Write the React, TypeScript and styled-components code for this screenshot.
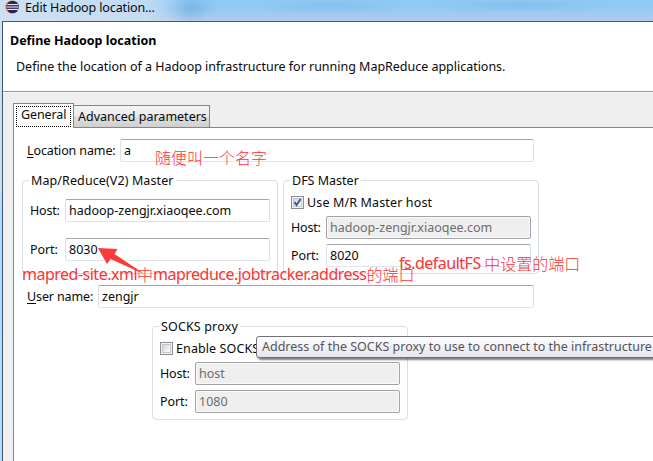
import React from 'react';
import styled, { createGlobalStyle } from 'styled-components';

const Global = createGlobalStyle`
  * { box-sizing: border-box; }
  html, body { margin: 0; padding: 0; overflow: hidden; }
  body { font: 12.5px/23px "Noto Sans", "Noto Sans CJK SC", sans-serif; color: #0a0a0a; }
`;

const Window = styled.div`
  position: relative;
  width: 653px;
  height: 461px;
  overflow: hidden;
  display: flex;
  flex-direction: column;
  background: #efefef;
`;

const TitleBar = styled.header`
  flex: none;
  height: 21px;
  display: flex;
  align-items: flex-start;
  gap: 6px;
  padding-left: 5px;
  line-height: 15px;
  background:
    linear-gradient(90deg, rgba(214, 228, 242, 0.85) 0, rgba(208, 225, 243, 0.75) 145px, rgba(200, 222, 243, 0) 190px),
    radial-gradient(ellipse 28px 14px at 188px 8px, rgba(110, 172, 225, 0.7), rgba(110, 172, 225, 0)),
    radial-gradient(ellipse 70px 8px at 330px 6px, rgba(130, 190, 236, 0.8), rgba(130, 190, 236, 0)),
    radial-gradient(ellipse 90px 7px at 520px 5px, rgba(128, 190, 236, 0.8), rgba(128, 190, 236, 0)),
    linear-gradient(#8dcaf5 0, #94c9f3 45%, #a9c9ed 75%, #b0ccec);
`;

const Logo = styled.svg`
  display: block;
  width: 14px;
  height: 14px;
`;

const Text = styled.span<{ $ls?: number }>`
  white-space: nowrap;
  letter-spacing: ${(p) => p.$ls ?? 0}px;
`;

const Frame = styled.div`
  flex: 1;
  display: flex;
  background: linear-gradient(#d3e1ee 0, #cfdfee 168px, #b3d8fa 182px, #b5d8f8);
  padding-left: 2px;
`;

const Dialog = styled.main`
  flex: 1;
  display: flex;
  flex-direction: column;
  border-top: 1px solid #46597a;
  border-left: 1px solid #3f5673;
  background: #efefef;
`;

const Banner = styled.section`
  height: 70px;
  flex: none;
  display: flex;
  flex-direction: column;
  padding: 7px 0 0 7px;
  background: #fff;
  border-bottom: 1px solid #98989a;
`;

const Heading = styled.h1`
  margin: 0;
  font-size: 12.5px;
  font-weight: 700;
  line-height: 23px;
  color: #000;
`;

const Description = styled.p`
  margin: 3px 0 0 6px;
  line-height: 23px;
`;

const Tabs = styled.section`
  flex: 1;
  display: flex;
  flex-direction: column;
  padding: 10px 0 0 10px;
  border-top: 1px solid #fbfbfb;
`;

const TabList = styled.div`
  display: flex;
  align-items: flex-end;
  height: 24px;
  flex: none;
`;

const ActiveTab = styled.div`
  width: 61px;
  height: 25px;
  margin-bottom: -1px;
  z-index: 1;
  padding: 2px 2px 0;
  border: 1px solid #85858f;
  border-bottom: 0;
  background: #fff;
`;

const FocusRing = styled.div`
  width: 55px;
  height: 21px;
  padding-left: 4px;
  border: 1px dotted #000;
  line-height: 16px;
`;

const Tab = styled.div`
  width: 136px;
  height: 22px;
  padding-left: 4px;
  border: 1px solid #85858f;
  border-left: 0;
  border-bottom: 0;
  background: linear-gradient(#f3f3f3 0, #ececec 48%, #dedede 52%, #d0d0d0);
  line-height: 22px;
`;

const Page = styled.div`
  flex: 1;
  display: flex;
  flex-direction: column;
  align-items: flex-start;
  padding: 11px 0 0 8px;
  border-top: 1px solid #85858f;
  border-left: 1px solid #85858f;
  background: #fff;
`;

const Row = styled.div<{ $top?: number; $indent?: number }>`
  display: flex;
  height: 23px;
  margin-top: ${(p) => p.$top ?? 0}px;
  margin-left: ${(p) => p.$indent ?? 0}px;
`;

const Label = styled.label<{ $w: number; $ls?: number }>`
  width: ${(p) => p.$w}px;
  flex: none;
  white-space: nowrap;
  letter-spacing: ${(p) => p.$ls ?? 0}px;
  u { text-decoration: underline; text-underline-offset: 2px; text-decoration-thickness: 1px; }
`;

const Field = styled.div<{ $w: number; $off?: boolean }>`
  width: ${(p) => p.$w}px;
  height: 23px;
  padding-left: 3px;
  border: 1px solid;
  border-color: ${(p) => (p.$off ? '#a2a3a6' : '#a4a5ad #dbdfe6 #dfe5ee #dbdfe6')};
  border-radius: 2px;
  background: ${(p) => (p.$off ? '#efefef' : '#fff')};
  box-shadow: ${(p) => (p.$off ? 'inset 0 0 0 1px #fafafa' : 'none')};
  color: ${(p) => (p.$off ? '#6d6d6d' : '#0a0a0a')};
  line-height: 21px;
  white-space: nowrap;
`;

const Groups = styled.div`
  display: flex;
  gap: 5px;
  margin-top: 18px;
`;

const Group = styled.div`
  display: flex;
  flex-direction: column;
  align-items: flex-start;
  width: 256px;
  height: 94px;
  padding-left: 7px;
  border: 1px solid #d5dfe5;
  border-radius: 4px;
`;

const Legend = styled.div<{ $ls?: number }>`
  height: 16px;
  margin: -9px 0 0 -1px;
  padding: 0 2px;
  background: #fff;
  line-height: 17px;
  letter-spacing: ${(p) => p.$ls ?? 0}px;
  white-space: nowrap;
`;

const CheckRow = styled.div`
  display: flex;
  align-items: center;
  gap: 3px;
  height: 13px;
  margin-top: 8px;
`;

const CheckBox = styled.span`
  width: 13px;
  height: 13px;
  flex: none;
  display: flex;
  border: 1px solid #8b8d90;
  background: linear-gradient(135deg, #c3c7ce, #fafafa 75%);
  box-shadow: inset 0 0 0 1px #f4f4f4, inset 0 0 0 2px #c3c7cd;
  svg { width: 11px; height: 11px; }
`;

const ProxySection = styled.div`
  margin: 18px 0 0 130px;
`;

const Tooltip = styled.div`
  position: absolute;
  left: 256px;
  top: 336px;
  width: 410px;
  height: 22px;
  padding-left: 5px;
  border: 1px solid #717177;
  border-radius: 3px;
  background: linear-gradient(#fff, #e5e5f0);
  box-shadow: 2px 2px 2px rgba(0, 0, 0, 0.5);
  color: #555;
  line-height: 20px;
  white-space: nowrap;
`;

const Note = styled.div<{ $x: number; $y: number }>`
  position: absolute;
  left: ${(p) => p.$x}px;
  top: ${(p) => p.$y}px;
  display: flex;
  color: #fb3434;
  font-size: 16px;
  letter-spacing: -0.5px;
  line-height: 20px;
  white-space: pre;
`;

const Han = styled.span`
  font-family: "Noto Sans CJK SC", sans-serif;
  font-size: 16px;
  font-weight: 300;
  letter-spacing: 0;
`;

const Arrow = styled.svg`
  position: absolute;
  left: 97px;
  top: 246px;
  width: 50px;
  height: 32px;
`;

export default function App() {
  return (
    <>
      <Global />
      <Window>
        <TitleBar>
          <Logo viewBox="0 0 14 14">
            <circle cx="6.6" cy="7" r="6.4" fill="#f39a2b" />
            <circle cx="7.6" cy="7" r="6.3" fill="#2c2255" />
            <path d="M2.2 4.6h10.8M1.6 7h12M2.2 9.4h10.8" stroke="#fff" strokeWidth="1" />
          </Logo>
          <Text $ls={-0.12}>Edit Hadoop location...</Text>
        </TitleBar>
        <Frame>
          <Dialog>
            <Banner>
              <Heading><Text>Define Hadoop location</Text></Heading>
              <Description>
                <Text $ls={-0.02}>Define the location of a Hadoop infrastructure for running MapReduce applications.</Text>
              </Description>
            </Banner>
            <Tabs>
              <TabList>
                <ActiveTab><FocusRing><Text $ls={-0.1}>General</Text></FocusRing></ActiveTab>
                <Tab><Text>Advanced parameters</Text></Tab>
              </TabList>
              <Page>
                <Row $indent={5}>
                  <Label $w={93} $ls={-0.12}><u>L</u>ocation name:</Label>
                  <Field $w={414}>a</Field>
                </Row>
                <Groups>
                  <Group>
                    <Legend $ls={0.1}>Map/Reduce(V2) Master</Legend>
                    <Row $top={11}><Label $w={35} $ls={-0.2}>Host:</Label><Field $w={205}>hadoop-zengjr.xiaoqee.com</Field></Row>
                    <Row $top={16}><Label $w={35} $ls={-0.1}>Port:</Label><Field $w={205}>8030</Field></Row>
                  </Group>
                  <Group>
                    <Legend>DFS Master</Legend>
                    <CheckRow>
                      <CheckBox>
                        <svg viewBox="0 0 11 11"><path d="M2.5 5.2 4.6 8 8.6 2" fill="none" stroke="#3c5a9a" strokeWidth="2" /></svg>
                      </CheckBox>
                      <Text $ls={0.14}>Use M/R Master host</Text>
                    </CheckRow>
                    <Row $top={7}><Label $w={35} $ls={-0.2}>Host:</Label><Field $w={205} $off>hadoop-zengjr.xiaoqee.com</Field></Row>
                    <Row $top={5}><Label $w={35} $ls={-0.1}>Port:</Label><Field $w={205}>8020</Field></Row>
                  </Group>
                </Groups>
                <Row $top={11} $indent={5}>
                  <Label $w={71} $ls={-0.12}><u>U</u>ser name:</Label>
                  <Field $w={436}>zengjr</Field>
                </Row>
                <ProxySection>
                  <Group>
                    <Legend $ls={0.15}>SOCKS proxy</Legend>
                    <CheckRow>
                      <CheckBox />
                      <Text $ls={0.1}>Enable SOCKS</Text>
                    </CheckRow>
                    <Row $top={7}><Label $w={35} $ls={-0.2}>Host:</Label><Field $w={205} $off>host</Field></Row>
                    <Row $top={5}><Label $w={35} $ls={-0.1}>Port:</Label><Field $w={205} $off>1080</Field></Row>
                  </Group>
                </ProxySection>
              </Page>
            </Tabs>
          </Dialog>
        </Frame>
        <Tooltip>Address of the SOCKS proxy to use to connect to the infrastructure</Tooltip>
        <Arrow viewBox="0 0 50 32">
          <path d="M1 2 20.5 3 17.5 8 48 28.5 13.5 13 10 18Z" fill="#fb3a3a" />
        </Arrow>
        <Note $x={155} $y={147}><Han>随便叫一个名字</Han></Note>
        <Note $x={22} $y={264}>mapred-site.xml<Han>中</Han>mapreduce.jobtracker.address<Han>的端口</Han></Note>
        <Note $x={399} $y={253}>fs.defaultFS <Han>中设置的端口</Han></Note>
      </Window>
    </>
  );
}
